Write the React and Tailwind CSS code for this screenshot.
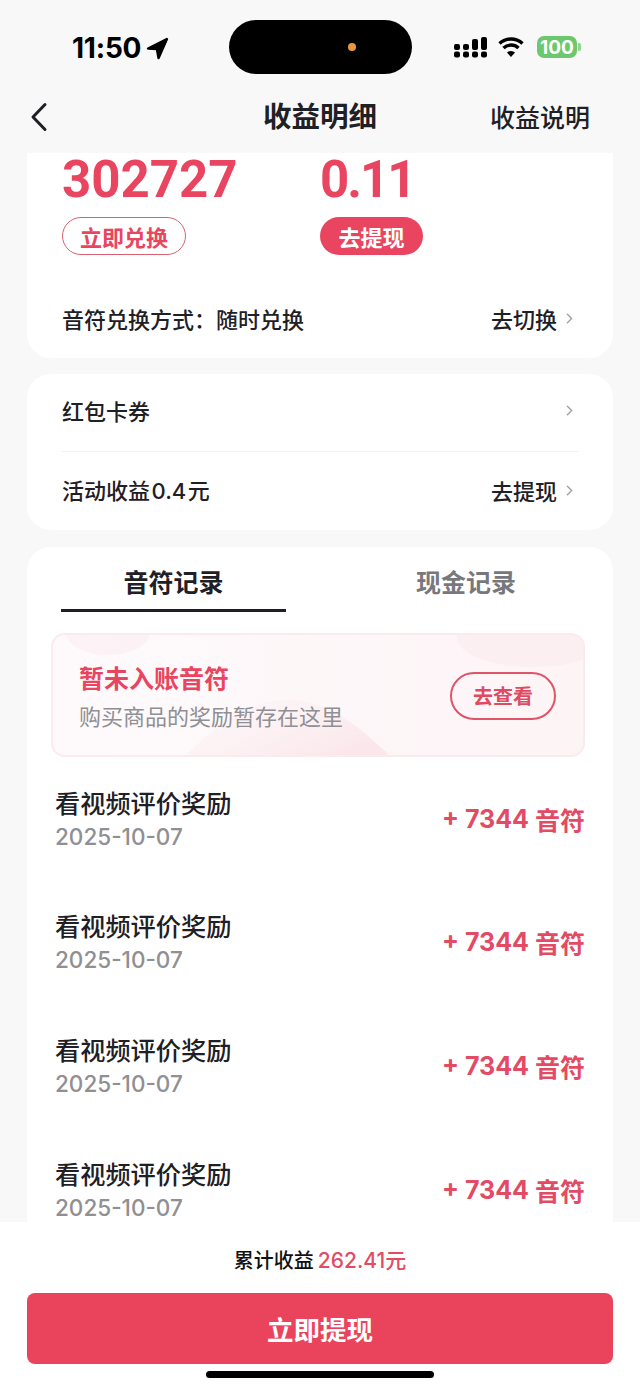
import { ChevronRight } from "lucide-react";

const cjk = "font-['Noto_Sans_CJK_SC','Noto_Sans',sans-serif]";

function StatusBar() {
  return (
    <div className="flex h-[94px] items-start">
      <div className="flex w-[229px] items-center pl-[72px] pt-[32px]">
        <span className="font-['Inter',sans-serif] text-[28px] leading-[32px] font-bold tracking-[-0.2px] text-black">11:50</span>
        <svg width="23" height="23" viewBox="0 0 22 22" className="ml-[5px]">
          <path d="M20 2 L2 11 L10.500 11.500 L12 20 Z" fill="#000" stroke="#000" strokeWidth="2.400" strokeLinejoin="round" />
        </svg>
      </div>
      <div className="mt-[20px] flex h-[54px] w-[183px] items-center justify-end rounded-[27px] bg-black pr-[56px]">
        <span className="h-[8px] w-[8px] rounded-full bg-[#e9973f]" />
      </div>
      <div className="ml-[42px] flex items-center pt-[36px]">
        <svg width="33" height="22" viewBox="0 0 33 22">
          <g fill="#000">
            <rect x="0" y="8" width="6" height="6" rx="2" /><rect x="0" y="15.500" width="6" height="6" rx="2" />
            <rect x="9" y="8" width="6" height="6" rx="2" /><rect x="9" y="15.500" width="6" height="6" rx="2" />
            <rect x="18" y="3" width="6" height="11" rx="2" /><rect x="18" y="15.500" width="6" height="6" rx="2" />
            <rect x="27" y="1" width="6" height="13" rx="2" /><rect x="27" y="15.500" width="6" height="6" rx="2" />
          </g>
        </svg>
        <svg width="26" height="22" viewBox="0 0 26 22" className="ml-[11px]">
          <path d="M13 21 L9 16.500 A6 6 0 0 1 17 16.500 Z" fill="#000" />
          <path d="M5.500 12 A11 11 0 0 1 20.500 12" fill="none" stroke="#000" strokeWidth="3.400" />
          <path d="M1.500 7.500 A17 17 0 0 1 24.500 7.500" fill="none" stroke="#000" strokeWidth="3.400" />
        </svg>
        <div className="ml-[13px] flex items-center">
          <span className="flex h-[22px] w-[40px] items-center justify-center rounded-[7px] bg-[#6cc76e] font-['Inter',sans-serif] text-[19px] leading-none font-bold text-white">100</span>
          <span className="ml-[1px] h-[8px] w-[3px] rounded-r-[2px] bg-[#8fd690]" />
        </div>
      </div>
    </div>
  );
}

function NavBar() {
  return (
    <div className={`relative flex h-[59px] items-start justify-between pl-[30px] pr-[50px] ${cjk}`}>
      <svg width="18" height="30" viewBox="0 0 18 30" className="mt-[8px]">
        <path d="M15 2.500 L3 15 L15 27.500" fill="none" stroke="#1f2025" strokeWidth="3" strokeLinecap="round" strokeLinejoin="round" />
      </svg>
      <span className="absolute left-0 right-0 top-[6px] text-center text-[28.500px] leading-[30px] font-bold text-[#1f2025]">收益明细</span>
      <span className="mt-[7px] text-[25px] leading-[30px] font-medium text-[#1f2025]">收益说明</span>
    </div>
  );
}

function LinkRow({ label, action }) {
  return (
    <div className="flex items-center justify-between">
      <span className="text-[22px] leading-[30px] font-medium text-[#1f2025]">{label}</span>
      <span className="flex items-center text-[22px] leading-[30px] font-medium text-[#1f2025]">
        {action}
        <ChevronRight size={17} strokeWidth={2} className="ml-[4px] text-[#a0a1a6]" />
      </span>
    </div>
  );
}

function Balance() {
  return (
    <div className="rounded-b-[24px] bg-white px-[35px] pb-[25px] pt-[3px]">
      <div className="flex">
        <div className="w-[258px]">
          <div className="font-['Roboto',sans-serif] text-[51px] leading-[48px] font-bold text-[#ea4560]">302727</div>
          <div className="mt-[13px] flex h-[38px] w-[124px] items-center justify-center rounded-full border border-[#d9606f] text-[22px] font-bold text-[#ea4560]">立即兑换</div>
        </div>
        <div>
          <div className="font-['Roboto',sans-serif] text-[51px] leading-[48px] font-bold tracking-[-2px] text-[#ea4560]">0.11</div>
          <div className="mt-[13px] flex h-[38px] w-[103px] items-center justify-center rounded-full bg-[#ea4560] text-[22px] font-bold text-white">去提现</div>
        </div>
      </div>
      <div className="mt-[48px]">
        <LinkRow label="音符兑换方式：随时兑换" action="去切换" />
      </div>
    </div>
  );
}

function Coupons() {
  return (
    <div className="mt-[16px] rounded-[24px] bg-white px-[35px] pb-[24px] pt-[21px]">
      <div className="flex items-center justify-between pb-[26px]">
        <span className="text-[22px] leading-[30px] font-medium text-[#1f2025]">红包卡券</span>
        <ChevronRight size={17} strokeWidth={2} className="text-[#a0a1a6]" />
      </div>
      <div className="mb-[22px] h-px bg-[#f1f1f2]" />
      <LinkRow label={<>活动收益<span className="mx-[1.500px] font-['Inter',sans-serif]">0.4</span>元</>} action="去提现" />
    </div>
  );
}

function Notice() {
  return (
    <div className="relative mt-[21px] ml-[24px] mr-[28px] flex h-[124px] items-center justify-between overflow-hidden rounded-[14px] border-2 border-[#f9ebee] bg-gradient-to-r from-[#fefafb] to-[#fdf4f6] pl-[26px] pr-[27px]">
      <svg className="absolute inset-0" width="534" height="124" viewBox="0 0 534 124" aria-hidden>
        <defs>
          <linearGradient id="blob" x1="0" y1="0" x2="1" y2="0.6">
            <stop offset="0" stopColor="#fdf4f6" stopOpacity="0.2" />
            <stop offset="1" stopColor="#fae6eb" />
          </linearGradient>
        </defs>
        <ellipse cx="55" cy="-2" rx="42" ry="22" fill="#fbeff2" opacity="0.7" />
        <ellipse cx="480" cy="2" rx="76" ry="30" fill="#fbeaee" opacity="0.5" />
        <path d="M130 124 C170 80 220 50 270 72 C300 85 320 105 340 124 Z" fill="url(#blob)" />
      </svg>
      <div className="relative">
        <div className="text-[25px] leading-[34px] font-bold text-[#ea4560]">暂未入账音符</div>
        <div className="mt-[6px] text-[22px] leading-[30px] text-[#8f8f94]">购买商品的奖励暂存在这里</div>
      </div>
      <div className="relative mt-[2px] flex h-[48px] w-[106px] items-center justify-center rounded-full border-2 border-[#df5468] text-[20px] font-bold text-[#df4a60]">去查看</div>
    </div>
  );
}

function RecordRow() {
  return (
    <div className="flex h-[123.670px] items-center justify-between pl-[28px] pr-[28px]">
      <div className="mt-[-7px]">
        <div className="text-[25.200px] leading-[34px] font-medium text-[#1f2025]">看视频评价奖励</div>
        <div className="mt-[3px] font-['Inter',sans-serif] text-[22.500px] leading-[30px] font-medium text-[#8f8f94]">2025-10-07</div>
      </div>
      <div className="mt-[-6px] flex items-center text-[25px] leading-[34px] font-bold text-[#e34b64]">
        <span className="font-['Inter',sans-serif]">+ 7344</span>
        <span className="ml-[6px]">音符</span>
      </div>
    </div>
  );
}

function Records() {
  return (
    <div className="mt-[17px] rounded-t-[24px] bg-white">
      <div className="flex pl-[34px] pr-[36px] pt-[15px]">
        <div className="w-[225px]">
          <div className="text-center text-[25px] leading-[38px] font-bold text-[#1f2025]">音符记录</div>
          <div className="mt-[9px] h-[3px] bg-[#1f2025]" />
        </div>
        <div className="flex-1 pl-[69px] text-center text-[25px] leading-[38px] font-bold text-[#77787d]">现金记录</div>
      </div>
      <Notice />
      <div className="mt-[3px]">
        <RecordRow />
        <RecordRow />
        <RecordRow />
        <RecordRow />
      </div>
    </div>
  );
}

function Footer() {
  return (
    <div className="flex h-[169px] shrink-0 flex-col items-center bg-white">
      <div className="mt-[24px] flex h-[28px] items-center text-[20px] font-medium text-[#111]">
        累计收益
        <span className="ml-[4px] text-[21px] text-[#e34b64]"><span className="font-['Inter',sans-serif]">262.41</span>元</span>
      </div>
      <div className="mt-[19px] flex h-[71px] w-[586px] items-center justify-center rounded-[8px] bg-[#ea445c] text-[26.500px] font-bold text-white">立即提现</div>
      <div className="mt-[7px] h-[7px] w-[228px] rounded-full bg-black" />
    </div>
  );
}

export default function App() {
  return (
    <div className={`flex h-[1391px] w-[640px] flex-col overflow-hidden bg-[#f8f8f9] ${cjk}`}>
      <StatusBar />
      <NavBar />
      <div className="flex-1 overflow-hidden px-[27px]">
        <Balance />
        <Coupons />
        <Records />
      </div>
      <Footer />
    </div>
  );
}
